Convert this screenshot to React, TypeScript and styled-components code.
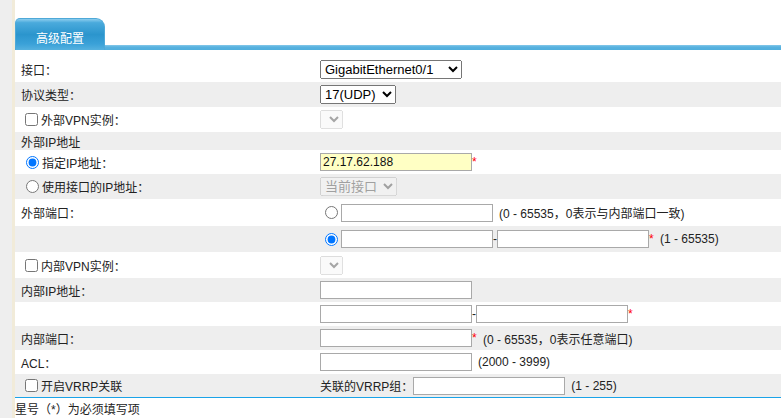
import React from 'react'
import styled, { createGlobalStyle } from 'styled-components'

const GlobalStyle = createGlobalStyle`
  html, body {
    margin: 0;
    padding: 0;
    background: #fff;
  }
  body {
    font-family: "Liberation Sans", Arial, "Noto Sans CJK SC", sans-serif;
    font-size: 12px;
    color: #222;
  }
`

export default function App() {
  return (
    <Page>
      <GlobalStyle />
      <SideStrip />
      <Main>
        <TabBar>
          <Tab>高级配置</Tab>
          <TabLine />
        </TabBar>

        <Form>
          <Row h={25}>
            <Label>接口：</Label>
            <Field>
              <Select w={142} defaultValue="g01">
                <option value="g01">GigabitEthernet0/1</option>
              </Select>
            </Field>
          </Row>

          <Row h={25} shade>
            <Label>协议类型：</Label>
            <Field>
              <Select w={76} defaultValue="17">
                <option value="17">17(UDP)</option>
              </Select>
            </Field>
          </Row>

          <Row h={25}>
            <Label>
              <Check type="checkbox" />外部VPN实例：
            </Label>
            <Field>
              <Select w={23} disabled>
                <option value=""></option>
              </Select>
            </Field>
          </Row>

          <Row h={18} shade>
            <Label>外部IP地址</Label>
          </Row>

          <Row h={24}>
            <Label>
              <Radio type="radio" name="extip" defaultChecked />指定IP地址：
            </Label>
            <Field>
              <TextInput defaultValue="27.17.62.188" highlight />
              <Star>*</Star>
            </Field>
          </Row>

          <Row h={25} shade>
            <Label>
              <Radio type="radio" name="extip" />使用接口的IP地址：
            </Label>
            <Field>
              <Select w={77} disabled defaultValue="cur">
                <option value="cur">当前接口</option>
              </Select>
            </Field>
          </Row>

          <Row h={27}>
            <Label>外部端口：</Label>
            <Field>
              <Radio type="radio" name="extport" />
              <TextInput />
              <Hint>(0 - 65535，0表示与内部端口一致)</Hint>
            </Field>
          </Row>

          <Row h={26} shade>
            <Label />
            <Field>
              <Radio type="radio" name="extport" defaultChecked />
              <TextInput />
              <Dash>-</Dash>
              <TextInput />
              <Star>*</Star>
              <Hint>(1 - 65535)</Hint>
            </Field>
          </Row>

          <Row h={26}>
            <Label>
              <Check type="checkbox" />内部VPN实例：
            </Label>
            <Field>
              <Select w={23} disabled>
                <option value=""></option>
              </Select>
            </Field>
          </Row>

          <Row h={24} shade>
            <Label>内部IP地址：</Label>
            <Field>
              <TextInput />
            </Field>
          </Row>

          <Row h={24}>
            <Label />
            <Field>
              <TextInput />
              <Dash>-</Dash>
              <TextInput />
              <Star>*</Star>
            </Field>
          </Row>

          <Row h={24} shade>
            <Label>内部端口：</Label>
            <Field>
              <TextInput />
              <Star>*</Star>
              <Hint>(0 - 65535，0表示任意端口)</Hint>
            </Field>
          </Row>

          <Row h={24}>
            <Label>ACL：</Label>
            <Field>
              <TextInput />
              <Hint>(2000 - 3999)</Hint>
            </Field>
          </Row>

          <Row h={23} shade>
            <Label>
              <Check type="checkbox" />开启VRRP关联
            </Label>
            <Field>
              <span>关联的VRRP组：</span>
              <TextInput />
              <Hint>(1 - 255)</Hint>
            </Field>
          </Row>
        </Form>

        <Footnote>星号（*）为必须填写项</Footnote>
      </Main>
    </Page>
  )
}

const Page = styled.div`
  display: flex;
  min-height: 100vh;
`

const SideStrip = styled.div`
  width: 12px;
  flex-shrink: 0;
  background: #eeeeee;
  border-right: 3px solid #f1ebd9;
`

const Main = styled.div`
  flex: 1;
  display: flex;
  flex-direction: column;
`

const TabBar = styled.div`
  display: flex;
  align-items: flex-end;
  padding-top: 18px;
`

const Tab = styled.div`
  width: 90px;
  height: 32px;
  box-sizing: border-box;
  display: flex;
  align-items: center;
  justify-content: center;
  padding-top: 5px;
  color: #fff;
  font-size: 12px;
  border-radius: 5px 9px 0 0;
  border: 1px solid #4ea9d8;
  border-bottom: none;
  background: linear-gradient(
    to bottom,
    #8ccdee 0%,
    #4aaadc 12%,
    #2b95cd 50%,
    #3aa1d8 80%,
    #55b1df 100%);
`

const TabLine = styled.div`
  flex: 1;
  height: 5px;
  background: linear-gradient(to bottom, #86c8ea 0%, #58b2df 40%, #50aedd 100%);
`

const Form = styled.div`
  margin-top: 7px;
  border-bottom: 1px solid #1aa3e8;
`

const Row = styled.div<{ h: number; shade?: boolean }>`
  display: flex;
  align-items: center;
  height: ${p => p.h}px;
  background: ${p => (p.shade ? '#eeeeee' : '#ffffff')};
`

const Label = styled.div`
  width: 305px;
  flex-shrink: 0;
  box-sizing: border-box;
  padding-left: 6px;
  display: flex;
  align-items: center;
  white-space: nowrap;
`

const Field = styled.div`
  display: flex;
  align-items: center;
  white-space: nowrap;
`

const Check = styled.input`
  width: 13px;
  height: 13px;
  margin: 0 3px 0 4px;
`

const Radio = styled.input`
  width: 13px;
  height: 13px;
  margin: 0 3px 0 5px;
`

const Select = styled.select<{ w: number }>`
  width: ${p => p.w}px;
  height: 19px;
  box-sizing: border-box;
  font-family: "Liberation Sans", Arial, "Noto Sans CJK SC", sans-serif;
  font-size: 13px;
  margin: 0;
`

const TextInput = styled.input<{ highlight?: boolean }>`
  width: 152px;
  height: 18px;
  box-sizing: border-box;
  margin: 0;
  padding: 0 2px;
  border: 1px solid #a9a9a9;
  background: ${p => (p.highlight ? '#ffffc4' : '#ffffff')};
  font-family: "Liberation Sans", Arial, "Noto Sans CJK SC", sans-serif;
  font-size: 12px;
  color: #111;
  outline: none;
`

const Dash = styled.span`
  width: 4px;
  text-align: center;
`

const Star = styled.span`
  color: #ff0000;
  width: 5px;
  font-size: 12px;
`

const Hint = styled.span`
  margin-left: 6px;
`

const Footnote = styled.div`
  padding-top: 3px;
  line-height: 18px;
`
